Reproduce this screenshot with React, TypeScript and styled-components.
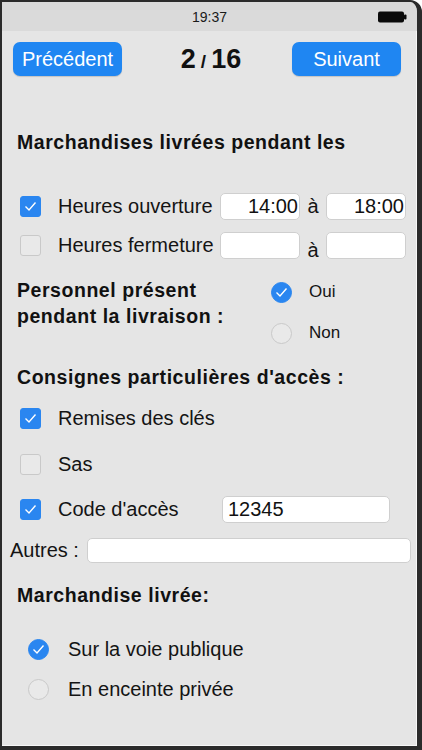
import React from 'react';
import styled, { createGlobalStyle } from 'styled-components';

const GlobalStyle = createGlobalStyle`
  html, body {
    margin: 0;
    padding: 0;
    background: #ffffff;
  }
  body {
    font-family: "Liberation Sans", Arial, sans-serif;
    color: #141414;
  }
`;

const Phone = styled.div`
  width: 422px;
  height: 750px;
  box-sizing: border-box;
  border-style: solid;
  border-color: #2b2b2b;
  border-width: 2px 5px 4px 2px;
  border-top-right-radius: 12px;
  background: #e5e5e5;
  box-shadow: inset -1px -1px 0 #f7f7f7;
  overflow: hidden;
  display: flex;
  flex-direction: column;
`;

const StatusBar = styled.div`
  height: 29px;
  flex: none;
  background: #dadada;
  display: grid;
  grid-template-columns: 1fr auto 1fr;
  align-items: center;
`;

const Clock = styled.div`
  grid-column: 2;
  font-size: 14px;
  color: #1a1a1a;
`;

const Battery = styled.svg`
  grid-column: 3;
  justify-self: end;
  margin-right: 10px;
`;

const Content = styled.div`
  display: flex;
  flex-direction: column;
  padding: 0 11px 0 0;
`;

const NavBar = styled.div`
  margin-top: 11px;
  padding: 0 5px 0 11px;
  display: flex;
  align-items: center;
  justify-content: space-between;
`;

const NavButton = styled.button`
  width: 109px;
  height: 34px;
  border: none;
  border-radius: 7px;
  background: #1f86f2;
  color: #ffffff;
  font-family: "Liberation Sans", Arial, sans-serif;
  font-size: 20px;
  padding: 0;
  box-shadow: 0 1px 1px rgba(0, 0, 0, 0.15);
`;

const PageCount = styled.div`
  font-weight: bold;
  font-size: 27px;
  color: #111;
  margin-left: 8px;
  display: flex;
  align-items: baseline;
  gap: 5px;
`;

const Slash = styled.span`
  font-size: 19px;
`;

const SectionTitle = styled.div<{ $mt: number; $pl?: number }>`
  margin-top: ${(p) => p.$mt}px;
  padding-left: ${(p) => p.$pl ?? 15}px;
  font-weight: bold;
  font-size: 19.5px;
  letter-spacing: 0.55px;
  line-height: 24px;
  color: #111;
`;

const Row = styled.div<{ $mt: number; $h?: number; $pl?: number }>`
  margin-top: ${(p) => p.$mt}px;
  height: ${(p) => p.$h ?? 28}px;
  padding-left: ${(p) => p.$pl ?? 18}px;
  display: flex;
  align-items: center;
`;

const Box = styled.span<{ $checked?: boolean }>`
  flex: none;
  width: 21px;
  height: 21px;
  box-sizing: border-box;
  border-radius: 3px;
  border: 1px solid ${(p) => (p.$checked ? '#2a86f0' : '#c9c9c9')};
  background: ${(p) => (p.$checked ? '#2a86f0' : '#e9e9e9')};
  display: flex;
  align-items: center;
  justify-content: center;
`;

const Dot = styled.span<{ $checked?: boolean }>`
  flex: none;
  width: 21px;
  height: 21px;
  box-sizing: border-box;
  border-radius: 50%;
  border: 1px solid ${(p) => (p.$checked ? '#2a86f0' : '#c9c9c9')};
  background: ${(p) => (p.$checked ? '#2a86f0' : '#e9e9e9')};
  display: flex;
  align-items: center;
  justify-content: center;
`;

const Label = styled.span<{ $w?: number; $ml?: number; $size?: number }>`
  margin-left: ${(p) => p.$ml ?? 17}px;
  width: ${(p) => (p.$w ? `${p.$w}px` : 'auto')};
  flex: none;
  font-size: ${(p) => p.$size ?? 20}px;
  color: #141414;
  white-space: nowrap;
`;

const Field = styled.input<{ $w: number; $h?: number; $align?: string }>`
  flex: none;
  width: ${(p) => p.$w}px;
  height: ${(p) => p.$h ?? 27}px;
  box-sizing: border-box;
  border: 1px solid #cfcfcf;
  border-radius: 5px;
  background: #ffffff;
  font-family: "Liberation Sans", Arial, sans-serif;
  font-size: 20px;
  color: #111;
  text-align: ${(p) => p.$align ?? 'left'};
  padding: ${(p) => (p.$align === 'right' ? '0 1px 0 0' : '0 0 0 5px')};
  outline: none;
`;

const Sep = styled.span<{ $low?: boolean }>`
  flex: none;
  width: 26px;
  text-align: center;
  font-size: 20px;
  margin-top: ${(p) => (p.$low ? 10 : 0)}px;
`;

const Split = styled.div`
  margin-top: 18px;
  display: flex;
`;

const SplitTitle = styled.div`
  width: 254px;
  padding-left: 15px;
  font-weight: bold;
  font-size: 19.5px;
  letter-spacing: 0.55px;
  line-height: 26px;
  color: #111;
`;

const RadioCol = styled.div`
  display: flex;
  flex-direction: column;
  gap: 11px;
`;

const RadioRow = styled.div`
  height: 30px;
  display: flex;
  align-items: center;
`;

const Check = () => (
  <svg width="13" height="11" viewBox="0 0 13 11">
    <polyline points="1.5,5.5 5,9 11.5,1.5" fill="none" stroke="#fff" strokeWidth="1.4" />
  </svg>
);

const CheckBox = ({ on }: { on?: boolean }) => <Box $checked={on}>{on && <Check />}</Box>;
const Radio = ({ on }: { on?: boolean }) => <Dot $checked={on}>{on && <Check />}</Dot>;

const App: React.FC = () => {
  return (
    <Phone>
      <GlobalStyle />
      <StatusBar>
        <Clock>19:37</Clock>
        <Battery width="29" height="12" viewBox="0 0 29 12">
          <rect x="0" y="0.5" width="26" height="11" rx="2" fill="#0a0a0a" />
          <rect x="26" y="3.5" width="2.5" height="5" rx="1" fill="#0a0a0a" />
        </Battery>
      </StatusBar>
      <Content>
        <NavBar>
          <NavButton>Précédent</NavButton>
          <PageCount>
            <span>2</span>
            <Slash>/</Slash>
            <span>16</span>
          </PageCount>
          <NavButton>Suivant</NavButton>
        </NavBar>

        <SectionTitle $mt={54}>Marchandises livrées pendant les</SectionTitle>

        <Row $mt={38}>
          <CheckBox on />
          <Label $w={162}>Heures ouverture</Label>
          <Field $w={80} $align="right" readOnly value="14:00" />
          <Sep>à</Sep>
          <Field $w={80} $align="right" readOnly value="18:00" />
        </Row>
        <Row $mt={11}>
          <CheckBox />
          <Label $w={162}>Heures fermeture</Label>
          <Field $w={80} $align="right" readOnly value="" />
          <Sep $low>à</Sep>
          <Field $w={80} $align="right" readOnly value="" />
        </Row>

        <Split>
          <SplitTitle>
            Personnel présent
            <br />
            pendant la livraison :
          </SplitTitle>
          <RadioCol>
            <RadioRow>
              <Radio on />
              <Label $size={17}>Oui</Label>
            </RadioRow>
            <RadioRow>
              <Radio />
              <Label $size={17}>Non</Label>
            </RadioRow>
          </RadioCol>
        </Split>

        <SectionTitle $mt={17}>Consignes particulières d'accès :</SectionTitle>

        <Row $mt={15}>
          <CheckBox on />
          <Label>Remises des clés</Label>
        </Row>
        <Row $mt={18}>
          <CheckBox />
          <Label>Sas</Label>
        </Row>
        <Row $mt={17}>
          <CheckBox on />
          <Label $w={164}>Code d'accès</Label>
          <Field $w={168} readOnly value="12345" />
        </Row>
        <Row $mt={14} $h={27} $pl={8}>
          <Label $ml={0} $w={77}>Autres :</Label>
          <Field $w={324} $h={25} readOnly value="" />
        </Row>

        <SectionTitle $mt={19}>Marchandise livrée:</SectionTitle>

        <Row $mt={27} $h={30} $pl={26}>
          <Radio on />
          <Label $ml={19}>Sur la voie publique</Label>
        </Row>
        <Row $mt={10} $h={30} $pl={26}>
          <Radio />
          <Label $ml={19}>En enceinte privée</Label>
        </Row>
      </Content>
    </Phone>
  );
};

export default App;
